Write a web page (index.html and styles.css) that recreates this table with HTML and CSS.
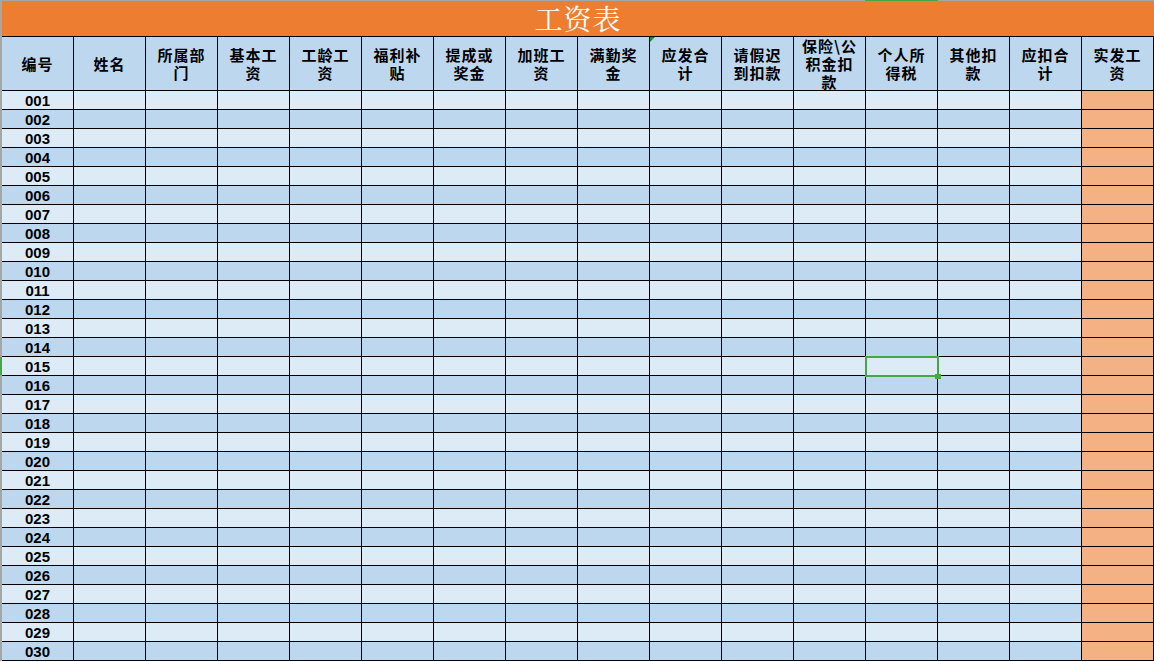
FILE: index.html
```html
<!DOCTYPE html>
<html lang="zh-CN">
<head>
    <meta charset="UTF-8">
    <meta name="viewport" content="width=device-width, initial-scale=1.0">
    <title>工资表</title>
    <link rel="stylesheet" href="styles.css">
</head>
<body>

<div class="sheet-wrap">
    <div class="title">工资表</div>
    <div class="grid" id="sheet">
        <div class="row head">
            <div>编号</div>
            <div>姓名</div>
            <div>所属部<br>门</div>
            <div>基本工<br>资</div>
            <div>工龄工<br>资</div>
            <div>福利补<br>贴</div>
            <div>提成或<br>奖金</div>
            <div>加班工<br>资</div>
            <div>满勤奖<br>金</div>
            <div class="note">应发合<br>计</div>
            <div>请假迟<br>到扣款</div>
            <div>保险\公<br>积金扣<br>款</div>
            <div>个人所<br>得税</div>
            <div>其他扣<br>款</div>
            <div>应扣合<br>计</div>
            <div>实发工<br>资</div>
        </div>
    </div>
    <div class="col-mark"></div>
    <div class="row-mark"></div>
</div>

<script>
    const sheet = document.getElementById('sheet');

    for (let i = 1; i <= 30; i++) {
        const row = document.createElement('div');
        row.className = 'row ' + (i % 2 ? 'odd' : 'even');

        for (let c = 0; c < 16; c++) {
            const cell = document.createElement('div');
            if (c === 0) {
                cell.className = 'code';
                cell.textContent = String(i).padStart(3, '0');
            } else if (c === 15) {
                cell.className = 'pay';
            }
            if (i === 15 && c === 12) {
                cell.className = 'selected'; // active cell
            }
            row.appendChild(cell);
        }
        sheet.appendChild(row);
    }
</script>

</body>
</html>
```

FILE: styles.css
```css
body {
    margin: 0;
    background-color: #ffffff;
    font-family: "Noto Sans CJK SC", sans-serif;
    color: #000;
}
.sheet-wrap {
    position: relative;
    width: 1152px;
    border-top: 1px solid #a6a6a6;
    border-left: 2px solid #a6a6a6;
}
.title {
    height: 35px;
    background-color: #ed7d31;
    color: #ffffff;
    text-align: center;
    font-family: "Noto Serif CJK SC", "Noto Sans CJK SC", serif;
    font-size: 28px;
    line-height: 35px;
    letter-spacing: 1px;
    border-bottom: 1px solid #000;
}
.grid {
    display: grid;
    grid-template-columns: repeat(16, 71px);
    grid-template-rows: 53px;
    grid-auto-rows: 18px;
    gap: 1px;
    background-color: #000;
    padding: 0 1px 1px 0;
}
.row {
    display: contents;
}
.head > div {
    position: relative;
    background-color: #bdd7ee;
    display: flex;
    align-items: center;
    justify-content: center;
    text-align: center;
    font-weight: bold;
    font-size: 15px;
    line-height: 18px;
    letter-spacing: 1px;
    overflow: visible;
}
.head .note::before {
    content: '';
    position: absolute;
    top: 0;
    left: 0;
    border-top: 5px solid #1f8a35;
    border-right: 5px solid transparent;
}
.odd > div {
    background-color: #ddebf7;
}
.even > div {
    background-color: #bdd7ee;
}
.row > .pay {
    background-color: #f4b183;
}
.code {
    font-family: "Liberation Sans", Arial, sans-serif;
    font-weight: bold;
    font-size: 15px;
    line-height: 20px;
    text-align: center;
}
.selected {
    position: relative;
}
.selected::after {
    content: '';
    position: absolute;
    left: -1px;
    top: -1px;
    right: -2px;
    bottom: -2px;
    border: 2px solid #44a844;
}
.selected::before {
    content: '';
    position: absolute;
    right: -4px;
    bottom: -4px;
    width: 6px;
    height: 5px;
    background-color: #44a844;
    z-index: 1;
}
.col-mark {
    position: absolute;
    top: -1px;
    left: 863px;
    width: 73px;
    height: 1px;
    background-color: #44a844;
}
.row-mark {
    position: absolute;
    top: 356px;
    left: -2px;
    width: 2px;
    height: 18px;
    background-color: #44a844;
}
```
